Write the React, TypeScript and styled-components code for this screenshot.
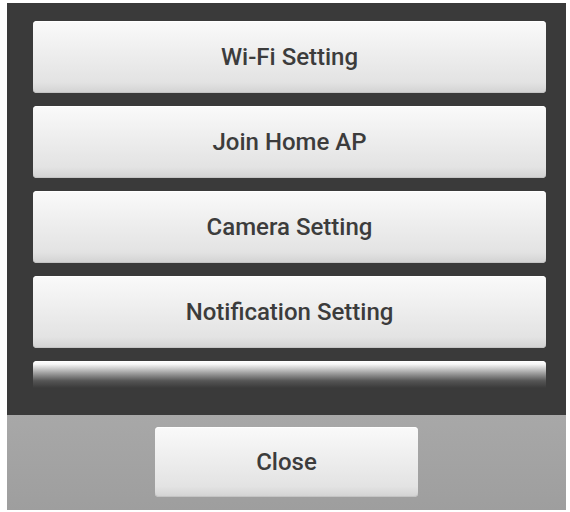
import styled, { createGlobalStyle } from 'styled-components';

const GlobalStyle = createGlobalStyle`
  html, body {
    margin: 0;
    padding: 0;
    background: #ffffff;
  }
  body {
    font-family: Roboto, "Liberation Sans", Arial, sans-serif;
  }
`;

// last entry is only half visible under the fading edge, so it has no label in view
const items = ['Wi-Fi Setting', 'Join Home AP', 'Camera Setting', 'Notification Setting', ''];

function App() {
  return (
    <Page>
      <GlobalStyle />
      <Dialog>
        <ListPanel>
          <Viewport>
            <List>
              {items.map((label, i) => (
                <MenuButton key={i}>{label}</MenuButton>
              ))}
            </List>
            <Fade />
          </Viewport>
        </ListPanel>
        <Footer>
          <CloseButton>Close</CloseButton>
        </Footer>
      </Dialog>
    </Page>
  );
}

const Page = styled.div`
  width: 570px;
  height: 512px;
  padding: 3px 4px 2px 7px;
  box-sizing: border-box;
  background: #ffffff;
  overflow: hidden;
`;

const Dialog = styled.div`
  display: flex;
  flex-direction: column;
  width: 559px;
`;

const ListPanel = styled.div`
  background: #3a3a3a;
  padding: 18px 20px 27px 26px;
`;

const Viewport = styled.div`
  position: relative;
  height: 367px;
  overflow: hidden;
`;

const List = styled.div`
  display: flex;
  flex-direction: column;
  gap: 13px;
`;

const buttonFace = `
  display: flex;
  align-items: center;
  justify-content: center;
  box-sizing: border-box;
  border: none;
  border-radius: 4px;
  font-family: Roboto, "Liberation Sans", Arial, sans-serif;
  font-size: 24px;
  font-weight: 500;
  color: #3c3c3c;
  background: linear-gradient(180deg, #fafafa 0%, #efefef 40%, #e3e3e3 85%, #d2d2d2 100%);
  box-shadow: inset 0 1px 0 #ffffff, inset 0 -1px 0 #c4c4c4;
`;

const MenuButton = styled.div`
  ${buttonFace}
  flex: 0 0 72px;
  height: 72px;
`;

const Fade = styled.div`
  position: absolute;
  left: 0;
  right: 0;
  bottom: 0;
  height: 24px;
  background: linear-gradient(180deg, rgba(58, 58, 58, 0) 0%, rgba(58, 58, 58, 0.85) 70%, #3a3a3a 100%);
`;

const Footer = styled.div`
  display: flex;
  justify-content: center;
  padding: 12px 0 13px;
  background: linear-gradient(180deg, #a8a8a8 0%, #9e9e9e 100%);
`;

const CloseButton = styled.div`
  ${buttonFace}
  width: 263px;
  height: 70px;
`;

export default App;
